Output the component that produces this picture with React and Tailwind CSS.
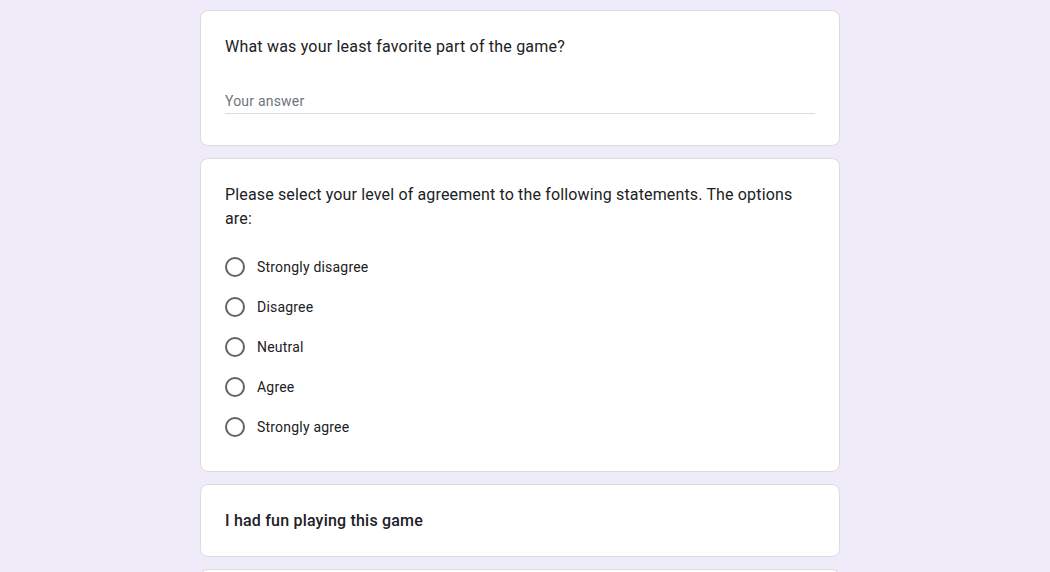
import React from 'react';

const options = ['Strongly disagree', 'Disagree', 'Neutral', 'Agree', 'Strongly agree'];

function Card({ children, className = '' }) {
    return (
        <div className={`bg-white border border-[#dadce0] rounded-lg px-6 ${className}`}>
            {children}
        </div>
    );
}

export default function App() {
    return (
        <div
            className="min-h-screen bg-[#f0ebf8] pt-[10px] pb-10 text-[#202124]"
            style={{ fontFamily: 'Roboto, "Liberation Sans", Arial, sans-serif' }}
        >
            <div className="w-[640px] ml-[200px] flex flex-col gap-3">
                {/* Short answer question */}
                <Card className="pt-[24px] pb-[31px]">
                    <div className="text-base leading-6 tracking-[0.2px]">
                        What was your least favorite part of the game?
                    </div>
                    <div className="mt-[32px] border-b border-[#dadce0] pb-[2px] text-sm leading-5 text-[#70757a] tracking-[0.2px]">
                        Your answer
                    </div>
                </Card>

                {/* Agreement scale */}
                <Card className="pt-[24px] pb-[24px]">
                    <div className="text-base leading-6 tracking-[0.15px]">
                        Please select your level of agreement to the following statements. The options are:
                    </div>
                    <div className="mt-[16px] flex flex-col">
                        {options.map((opt) => (
                            <div key={opt} className="h-10 flex items-center gap-3">
                                <span className="w-5 h-5 rounded-full border-2 border-[#5f6368] box-border" />
                                <span className="text-sm tracking-[0.2px]">{opt}</span>
                            </div>
                        ))}
                    </div>
                </Card>

                {/* Grid question title */}
                <Card className="pt-[24px] pb-[23px]">
                    <div className="text-base leading-6 font-medium tracking-[0.2px]">
                        I had fun playing this game
                    </div>
                </Card>

                <Card className="h-[120px]" />
            </div>
        </div>
    );
}
